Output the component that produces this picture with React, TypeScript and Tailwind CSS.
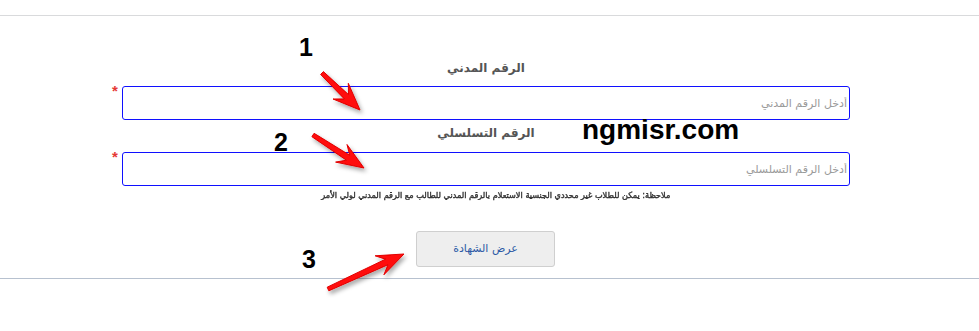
import React from "react";

type P = [number, number];

function arrowPoints(tail: P, tip: P, headLen: number, headW: number, notch: number, tailW: number, neckW: number): string {
  const dx = tip[0] - tail[0];
  const dy = tip[1] - tail[1];
  const L = Math.hypot(dx, dy);
  const ux = dx / L;
  const uy = dy / L;
  const nx = -uy;
  const ny = ux;
  const at = (d: number, o: number): P => [tail[0] + ux * d + nx * o, tail[1] + uy * d + ny * o];
  const barbD = L - headLen;
  const neckD = L - headLen + notch;
  const pts: P[] = [
    at(0, tailW / 2),
    at(neckD, neckW / 2),
    at(barbD, headW / 2),
    tip,
    at(barbD, -headW / 2),
    at(neckD, -neckW / 2),
    at(0, -tailW / 2),
  ];
  return pts.map((p) => `${p[0].toFixed(1)},${p[1].toFixed(1)}`).join(" ");
}

function Arrows() {
  const arrows = [
    arrowPoints([322, 73], [360, 110], 27, 22, 8, 4, 6),
    arrowPoints([313, 135], [364, 168], 27, 21, 8, 4, 6),
    arrowPoints([328, 289], [404, 254], 27, 21, 8, 4, 6),
  ];
  return (
    <svg className="pointer-events-none absolute left-0 top-0" width="979" height="331" viewBox="0 0 979 331">
      <defs>
        <filter id="sh" x="-30%" y="-30%" width="160%" height="160%">
          <feDropShadow dx="2" dy="3" stdDeviation="2" floodColor="#000" floodOpacity="0.35" />
        </filter>
      </defs>
      {arrows.map((p, i) => (
        <polygon key={i} points={p} fill="#ff0a0a" stroke="#e00000" strokeWidth="1" strokeLinejoin="round" filter="url(#sh)" />
      ))}
    </svg>
  );
}

const arabic = { fontFamily: '"DejaVu Sans", "Liberation Sans", sans-serif' };

function Field({ label, placeholder, labelGap, inputGap }: { label: string; placeholder: string; labelGap: string; inputGap: string }) {
  return (
    <div className={labelGap}>
      <div dir="rtl" className={`pl-[10px] text-center text-[12px] font-bold leading-[20px] text-[#555] ${inputGap}`} style={arabic}>
        {label}
      </div>
      <div className="flex items-start">
        <span className="ml-[112px] mr-[5px] mt-[-5px] w-[5px] text-[15px] font-bold leading-[20px] text-[#e53935]" style={{ fontFamily: '"Liberation Sans", Arial, sans-serif' }}>
          *
        </span>
        <input
          dir="rtl"
          placeholder={placeholder}
          className="h-[34px] w-[728px] rounded-[3px] border border-[#1010ff] bg-white pr-[2px] text-[11px] text-[#333] outline-none placeholder:text-[#9a9a9a]"
          style={arabic}
        />
      </div>
    </div>
  );
}

export default function App() {
  return (
    <div className="relative h-[331px] w-[979px] overflow-hidden bg-white" style={{ fontFamily: '"Liberation Sans", Arial, sans-serif' }}>
      <div className="h-[15px]" />
      <div className="border-t border-[#d9dadc]" />
      <div className="pt-[42px]">
        <div className="w-[962px]">
          <Field label="الرقم المدني" placeholder="أدخل الرقم المدني" labelGap="" inputGap="mb-[8px]" />
          <Field label="الرقم التسلسلي" placeholder="أدخل الرقم التسلسلي" labelGap="mt-[3px]" inputGap="mb-[9px]" />
          <div className="mt-[2px] flex h-[14px] justify-center pl-[30px]">
            <span
              dir="rtl"
              className="inline-block origin-center scale-x-[0.96] whitespace-nowrap text-[8.5px] font-normal leading-[14px] text-[#333] [-webkit-text-stroke:0.4px_#333]"
              style={arabic}
            >
              ملاحظة: يمكن للطلاب غير محددي الجنسية الاستعلام بالرقم المدني للطالب مع الرقم المدني لولي الأمر
            </span>
          </div>
          <div className="mt-[29px] flex justify-center pl-[9px]">
            <button
              dir="rtl"
              className="h-[36px] w-[139px] rounded-[3px] border border-[#cfcfcf] bg-[#eeeeee] text-[11px] text-[#2d5aa6]"
              style={arabic}
            >
              عرض الشهادة
            </button>
          </div>
        </div>
      </div>
      <div className="mt-[11px] border-t border-[#b7c1cf]" />

      <div className="absolute left-[299px] top-[35px] text-[25px] font-bold leading-none text-black">1</div>
      <div className="absolute left-[274px] top-[130px] text-[25px] font-bold leading-none text-black">2</div>
      <div className="absolute left-[302px] top-[247px] text-[25px] font-bold leading-none text-black">3</div>
      <div className="absolute left-[582px] top-[116px] text-[28px] font-bold leading-none text-black">ngmisr.com</div>
      <Arrows />
    </div>
  );
}
